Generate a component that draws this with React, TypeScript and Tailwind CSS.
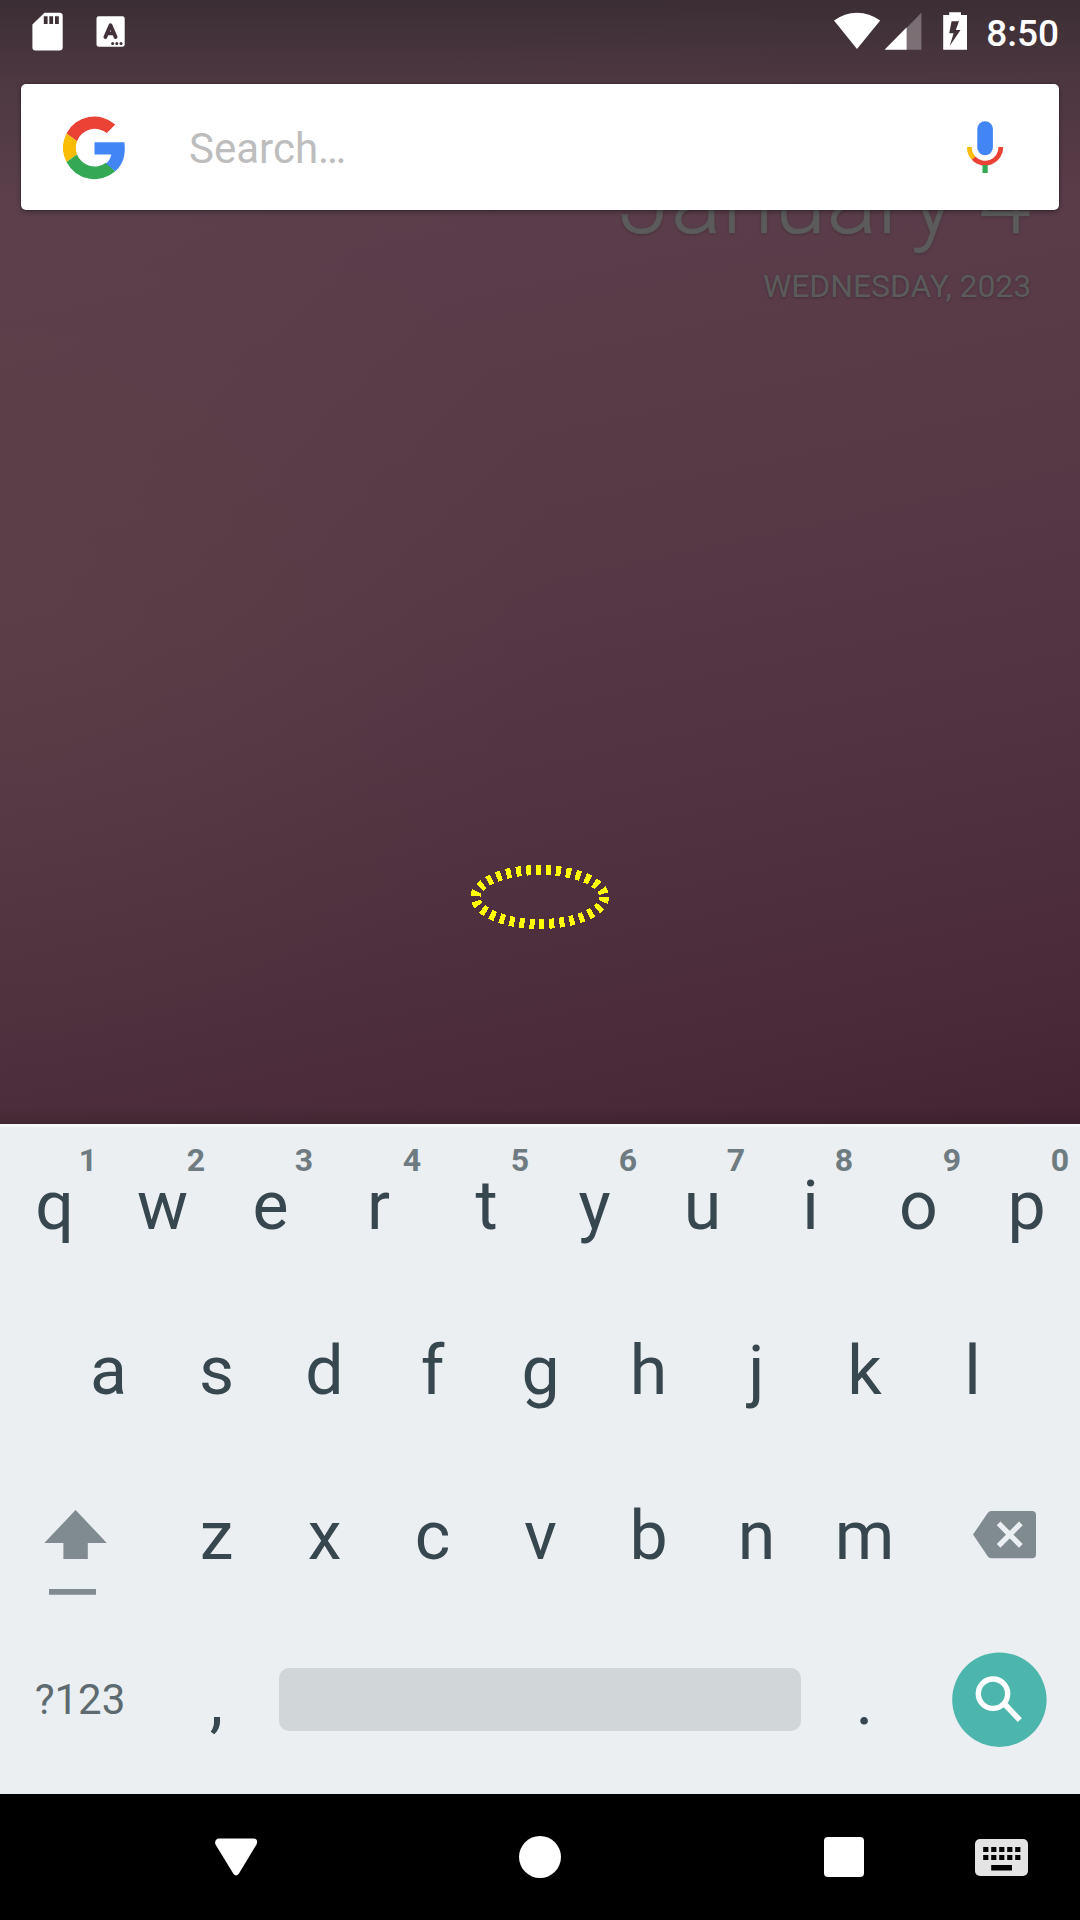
import React from "react";

function StatusBar() {
  return (
    <header className="flex h-[63px] items-start justify-between text-white">
      <div className="flex pl-8 pt-3">
        <svg className="h-[39px] w-8" viewBox="0 0 32 39">
          <path
            fill="#fff"
            fillRule="evenodd"
            d="M12.5 .7H27.6Q30.7 .7 30.7 3.8V35.4Q30.7 38.4 27.6 38.4H3.4Q.4 38.4 .4 35.4V12.6ZM11.8 4.3V12H15.6V4.3ZM17.3 4.3V12H21.1V4.3ZM23 4.3V12H26.8V4.3Z"
          />
        </svg>
        <svg className="ml-8 mt-1 h-8 w-[30px]" viewBox="0 0 30 32">
          <rect x=".5" y=".2" width="28.2" height="30.6" rx="2.4" fill="#fff" />
          <path d="M9.4 21 14.5 9.2 19.6 21M11.6 17.4h6" fill="none" stroke="#43303a" strokeWidth="3.8" strokeLinecap="round" strokeLinejoin="round" />
          <g fill="#43303a">
            <circle cx="16.6" cy="27.4" r="1.5" />
            <circle cx="20.8" cy="27.4" r="1.5" />
            <circle cx="25" cy="27.4" r="1.5" />
          </g>
        </svg>
      </div>
      <div className="flex pr-[21px] pt-3">
        <svg className="h-[38px] w-[47px]" viewBox="0 0 47 38">
          <path fill="#fff" d="M0 8.6Q10.5 .7 23 .7T46.2 8.6L23 37Z" />
        </svg>
        <svg className="ml-1 h-[38px] w-[38px]" viewBox="0 0 38 38">
          <path fill="#fff" fillOpacity=".3" d="M21.7 15.8 36.4 .7V37.7H21.7Z" />
          <path fill="#fff" d="M21.7 15.2V37.7H-.5Z" />
        </svg>
        <svg className="ml-5 h-[38px] w-6" viewBox="0 0 24 38">
          <path fill="#fff" fillRule="evenodd" d="M6.2 .3H18V3H24V37.7H.2V3H6.2ZM8.6 9.2 6.2 21.2H10.6L6.7 34 17.5 18H12.8L16 9.2Z" />
        </svg>
        <span className="ml-[19px] text-[37px] font-medium leading-[44px]">8:50</span>
      </div>
    </header>
  );
}

function GoogleLogo() {
  return (
    <svg className="mt-[2px] h-16 w-[63px]" viewBox="0 0 63 64">
      <path fill="#ea4335" d="M52.3 8.5A31.3 31.3 0 0 0 3.5 17.4L14 25.2A19 19 0 0 1 43.8 17Z" />
      <path fill="#fbbc05" d="M3.5 17.4A31.6 31.6 0 0 0 3.5 46.1L14 38.4A20 20 0 0 1 14 25.2Z" />
      <path fill="#34a853" d="M3.5 46.1A31.4 31.4 0 0 0 52.3 55.2L43 46.8A19 19 0 0 1 14 38.4Z" />
      <path fill="#4285f4" d="M31.5 26.2H61.4C62.8 38 60.7 48 52.3 55.2L43 47.5C46 45.2 47.6 42 48.3 38.4H31.5Z" />
    </svg>
  );
}

function SearchCard() {
  return (
    <section className="relative z-10 mx-[21px] mt-[21px] flex h-[126px] items-center rounded-[5px] bg-white pl-[42px] pr-[55px] shadow-[0_0_2px_rgba(0,0,0,0.4),0_2px_5px_rgba(0,0,0,0.3)]">
      <GoogleLogo />
      <span className="ml-[63px] grow pt-[3px] text-[42px] leading-none text-[#bdbdbd]">Search…</span>
      <svg className="h-[54px] w-[38px]" viewBox="0 0 38 54">
        <rect x="11.3" y="1.2" width="15.6" height="34" rx="7.8" fill="#4285f4" />
        <path d="M3.4 27A15.7 15.7 0 0 0 7.8 38.3" fill="none" stroke="#fbbc05" strokeWidth="4.8" />
        <path d="M7.6 38.2A15.7 15.7 0 0 0 34.8 27" fill="none" stroke="#ea4335" strokeWidth="4.8" />
        <path d="M16.5 45h5.2v8h-5.2z" fill="#34a853" />
      </svg>
    </section>
  );
}

function DateWidget() {
  return (
    <section className="-mt-[59px] flex flex-col items-end pr-[49px] text-[#5b5b5b] [text-shadow:0_1px_3px_rgba(0,0,0,0.25)]">
      <div className="text-[95px] font-light leading-[100px] [-webkit-text-stroke:0.5px_#5b5b5b]">January 4</div>
      <div className="mt-[15px] text-[32px] leading-10 tracking-[-0.12px]">WEDNESDAY, 2023</div>
    </section>
  );
}

function Key({ label, hint }: { label: string; hint?: string }) {
  return (
    <button className="relative h-[165px] w-[108px] pl-px text-center text-[68px] leading-[165px] text-[#37474f]">
      {label}
      {hint && <span className="absolute right-[11px] top-4 text-[32px] font-bold leading-10 text-[#6e7b81]">{hint}</span>}
    </button>
  );
}

function Keyboard() {
  return (
    <section className="h-[670px] bg-[#ebeff2]">
      <div className="flex shadow-[inset_0_3px_0_#f5f7f8]">
        {"qwertyuiop".split("").map((c, i) => (
          <Key key={c} label={c} hint={String((i + 1) % 10)} />
        ))}
      </div>
      <div className="flex justify-center">
        {"asdfghjkl".split("").map((c) => (
          <Key key={c} label={c} />
        ))}
      </div>
      <div className="flex">
        <button className="flex h-[165px] w-[162px] pl-11 pt-14">
          <svg className="h-[86px] w-[63px]" viewBox="0 0 63 86">
            <path fill="#808b8f" d="M31.6 0 62.8 33H43.8V49H19.4V33H.3ZM5 79H52V84.7H5Z" />
          </svg>
        </button>
        {"zxcvbnm".split("").map((c) => (
          <Key key={c} label={c} />
        ))}
        <button className="flex h-[165px] w-[162px] pl-[55px] pt-[57px]">
          <svg className="h-12 w-16" viewBox="0 0 64 48">
            <path fill="#808b8f" d="M18.5 0H59Q63 0 63 4V43.3Q63 47.3 59 47.3H18.5Q16 47.3 14.5 45L0 23.6 14.5 2.3Q16 0 18.5 0Z" />
            <path stroke="#ebeff2" strokeWidth="5.2" d="M25.6 12.3 47.9 34.9M47.9 12.3 25.6 34.9" />
          </svg>
        </button>
      </div>
      <div className="flex">
        <button className="h-[165px] w-[162px] pb-[3px] pr-[2px] text-[42px] leading-[60px] text-[#5d6b70]">?123</button>
        <Key label="," />
        <div className="flex h-[165px] w-[540px] px-[9px] pt-[49px]">
          <button className="h-[63px] w-full rounded-[10px] bg-[#d1d6d9]" />
        </div>
        <Key label="." />
        <div className="flex h-[165px] w-[162px] justify-center pt-[33px]">
          <svg className="h-[95px] w-[95px]" viewBox="0 0 95 95">
            <circle cx="47.4" cy="47.7" r="47.2" fill="#4db6ac" />
            <circle cx="41" cy="41.7" r="14.7" fill="none" stroke="#fff" strokeWidth="5.4" />
            <path d="M51.5 52 54 53.5 67.8 68.2" fill="none" stroke="#fff" strokeWidth="5.6" />
          </svg>
        </div>
      </div>
    </section>
  );
}

function NavBar() {
  return (
    <nav className="flex h-[126px] items-center bg-black pl-[214px]">
      <svg className="h-[42px] w-11" viewBox="0 0 44 42">
        <path fill="#fff" d="M4 2.6H40Q43 3 43.2 6L42.5 8.4 24.8 37.8Q22 41.3 19.4 37.8L1.5 8.4Q0 4 4 2.6Z" />
      </svg>
      <span className="ml-[261px] size-[42px] rounded-full bg-white" />
      <span className="ml-[263px] size-10 rounded-[4px] bg-white" />
      <svg className="ml-[111px] h-[37px] w-[53px]" viewBox="0 0 53 37">
        <rect width="53" height="37" rx="5" fill="#e4e4e4" />
        <path
          fill="#000"
          d="M8.2 8h5.2v5H8.2zm8 0h5.2v5h-5.2zm8 0h5.2v5h-5.2zm8 0h5.2v5h-5.2zm8 0h5.2v5h-5.2zM8.2 16h5.2v5H8.2zm8 0h5.2v5h-5.2zm8 0h5.2v5h-5.2zm8 0h5.2v5h-5.2zm8 0h5.2v5h-5.2zM16.2 26h20.8v5.4H16.2z"
        />
      </svg>
    </nav>
  );
}

export default function App() {
  return (
    <main className="flex h-[1920px] w-[1080px] flex-col overflow-hidden font-[Roboto,sans-serif]">
      <div className="relative h-[1124px] bg-[linear-gradient(180deg,rgba(38,34,36,0.6)_0px,rgba(48,38,42,0.32)_80px,transparent_200px,transparent_1108px,rgba(40,25,32,0.3)_1124px),radial-gradient(ellipse_560px_480px_at_0px_600px,rgba(98,72,70,0.3),transparent),linear-gradient(168deg,#5b404c_10%,#593b48_38%,#573946_49%,#533644_59%,#4f303e_75%,#4a2a38_90%,#442332_100%)]">
        <StatusBar />
        <SearchCard />
        <DateWidget />
        <svg className="absolute left-[468px] top-[862px] h-[70px] w-36" viewBox="0 0 144 70" shapeRendering="crispEdges">
          <ellipse cx="71.8" cy="35" rx="64.3" ry="27" fill="none" stroke="#ff0" strokeWidth="10" strokeDasharray="5 5" />
        </svg>
      </div>
      <Keyboard />
      <NavBar />
    </main>
  );
}
